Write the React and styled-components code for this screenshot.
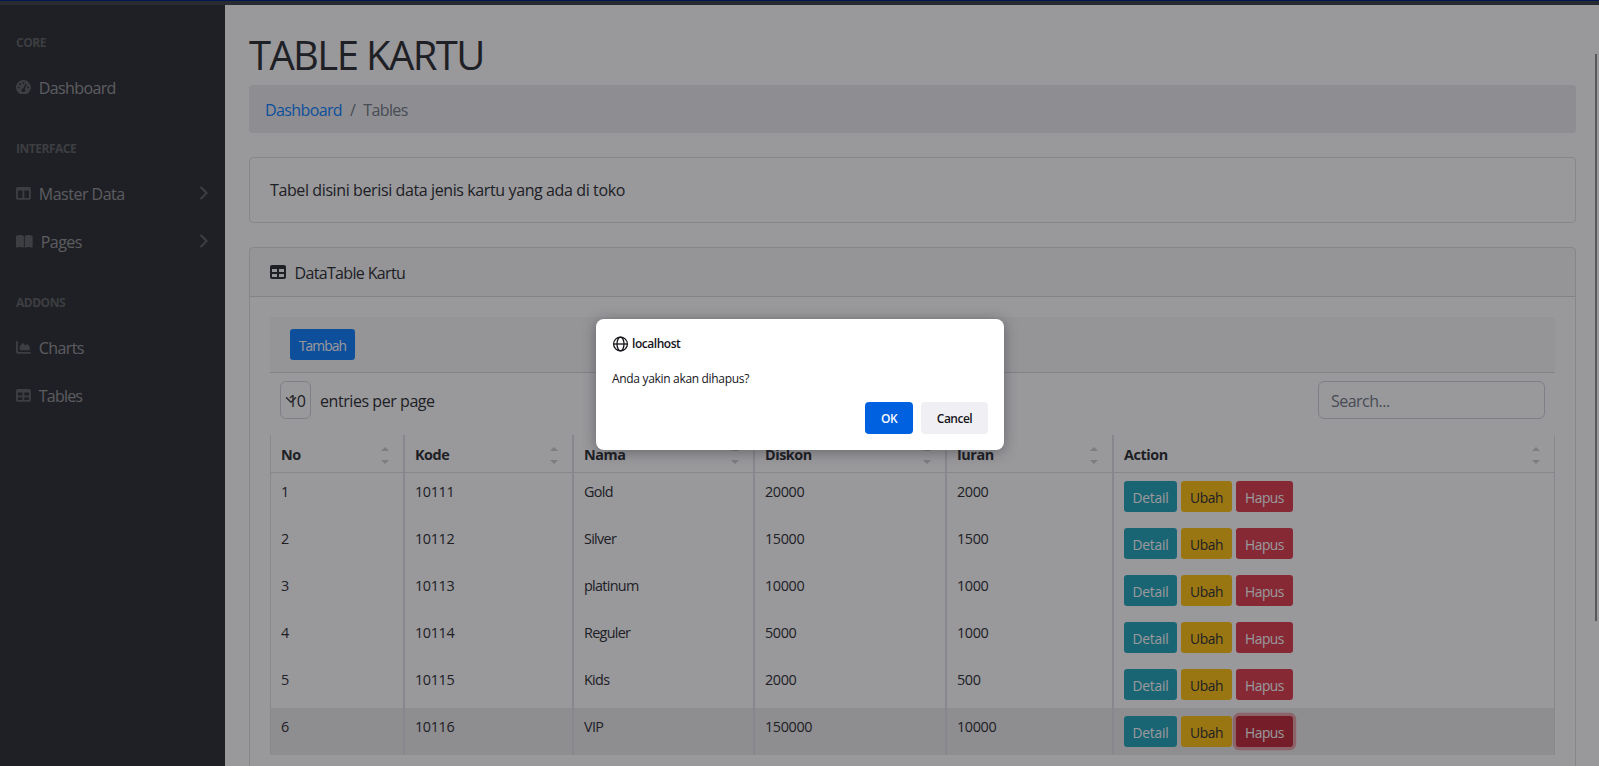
import React from "react";
import styled, { createGlobalStyle, css } from "styled-components";
import { FaGaugeHigh, FaTableColumns, FaBookOpen, FaChartArea, FaTable } from "react-icons/fa6";

const Global = createGlobalStyle`
  *, *::before, *::after { box-sizing: border-box; }
  html, body { margin: 0; height: 766px; overflow: hidden; }
  body {
    font-family: "Open Sans", "Noto Sans", sans-serif;
    font-size: 16px;
    line-height: 1.5;
    letter-spacing: -0.44px;
    color: #212529;
    background: #fff;
  }
  h1, p { margin: 0; font-weight: 400; }
  button, input { font: inherit; letter-spacing: inherit; }
`;

const Page = styled.div`
  height: 766px;
  display: flex;
  flex-direction: column;
  overflow: hidden;
`;
const TopBar = styled.div`
  flex: 0 0 5px;
  background: #343a40;
`;
const Columns = styled.div`
  flex: 1;
  min-height: 0;
  display: flex;
`;

const Sidebar = styled.nav`
  flex: 0 0 225px;
  padding-top: 1px;
  background: #212529;
  display: flex;
  flex-direction: column;
`;
const Heading = styled.div`
  padding: 28px 16px 12px;
  font-size: 12px;
  line-height: 18px;
  font-weight: 700;
  letter-spacing: -0.48px;
  color: rgba(255, 255, 255, 0.25);
`;
const NavLink = styled.a`
  display: flex;
  align-items: center;
  height: 48px;
  padding: 0 16px;
  color: rgba(255, 255, 255, 0.5);
  letter-spacing: ${(p) => p.$ls}px;
`;
const NavIcon = styled.span`
  display: flex;
  margin: 0 8px 2px 0;
  font-size: 14.8px;
  color: rgba(255, 255, 255, 0.25);
  svg { width: ${(p) => (p.$wide ? "1.125em" : "1em")}; }
`;
const Arrow = styled.svg`
  width: 8px;
  height: 14px;
  margin: 0 1px 3px auto;
  fill: none;
  stroke: rgba(255, 255, 255, 0.25);
  stroke-width: 2;
  stroke-linecap: round;
  stroke-linejoin: round;
`;

const Main = styled.main`
  flex: 1;
  min-width: 0;
  padding: 26px 23px 0 24px;
  display: flex;
  flex-direction: column;
`;
const Title = styled.h1`
  font-size: 40px;
  line-height: 48px;
  margin-bottom: 6px;
  letter-spacing: -1.6px;
`;
const Breadcrumb = styled.div`
  display: flex;
  gap: 8px;
  padding: 13px 16px 11px;
  margin-bottom: 24px;
  background: #e9ecef;
  border-radius: 4px;
  color: #6c757d;
  letter-spacing: -0.62px;
`;
const Crumb = styled.span`
  color: ${(p) => (p.$active ? "#6c757d" : "#007bff")};
`;
const Card = styled.section`
  border: 1px solid rgba(0, 0, 0, 0.125);
  border-radius: 4px;
  margin-bottom: 24px;
`;
const CardText = styled.p`
  padding: 20px;
  letter-spacing: -0.39px;
`;
const CardHeader = styled.header`
  display: flex;
  align-items: center;
  height: 49px;
  padding: 1px 20px 0;
  letter-spacing: -0.66px;
  background: rgba(0, 0, 0, 0.03);
  border-bottom: 1px solid rgba(0, 0, 0, 0.125);
  svg { margin: 0 8.5px 1px 0; }
`;
const CardBody = styled.div`
  padding: 20px 20px 60px;
`;
const ActionBar = styled.div`
  display: flex;
  padding: 12px 20px;
  background: rgba(0, 0, 0, 0.03);
  border-bottom: 1px solid rgba(0, 0, 0, 0.125);
  border-radius: 3px 3px 0 0;
`;

const tones = {
  primary: css`background: #007bff; color: #fff;`,
  info: css`background: #17a2b8; color: #fff;`,
  warning: css`background: #ffc107; color: #212529;`,
  danger: css`background: #dc3545; color: #fff;`,
  pressed: css`background: #bd2130; color: #fff; box-shadow: 0 0 0 3.2px rgba(225, 83, 97, 0.5);`,
};
const Button = styled.button`
  width: ${(p) => p.$w}px;
  height: 31px;
  padding: 2px 0 0;
  border: 0;
  border-radius: 3.2px;
  font-size: 13.8px;
  line-height: 29px;
  letter-spacing: ${(p) => p.$ls}px;
  text-align: center;
  ${(p) => tones[p.$tone]}
`;

const Controls = styled.div`
  display: flex;
  align-items: center;
  justify-content: space-between;
  height: 62px;
  padding: 0 10px 8px;
`;
const PerPage = styled.label`
  display: flex;
  align-items: center;
  gap: 9px;
`;
const Selector = styled.span`
  display: grid;
  align-items: center;
  width: 31px;
  height: 38px;
  border: 1px solid #ced4da;
  border-radius: 6px;
  > * { grid-area: 1 / 1; }
  svg { margin-left: 4px; }
`;
const SelectorValue = styled.span`
  padding: 1px 0 0 7px;
`;
const PerPageText = styled.span`
  padding-top: 1px;
`;
const Search = styled.input`
  width: 227px;
  height: 38px;
  padding: 1px 12px 0;
  border: 1px solid #ced4da;
  border-radius: 6px;
  background: transparent;
  letter-spacing: -0.52px;
  &::placeholder { color: #6c757d; opacity: 1; }
`;

const Table = styled.div`
  display: flex;
  flex-direction: column;
  font-size: 14.4px;
  line-height: 21.6px;
`;
const Row = styled.div`
  display: grid;
  grid-template-columns: 134px 169px 181px 192px 167px 1fr;
  height: ${(p) => (p.$head ? 38 : 47)}px;
  border-bottom: ${(p) => (p.$head ? "1px solid #dee2e6" : "0")};
  background: ${(p) => (p.$hover ? "rgba(0, 0, 0, 0.075)" : "transparent")};
  font-weight: ${(p) => (p.$head ? 700 : 400)};
`;
const Cell = styled.div`
  display: flex;
  gap: 4px;
  padding: ${(p) => (p.$head ? 9 : 8)}px 14px 0 10px;
  letter-spacing: ${(p) => (p.$head ? -0.45 : p.$words ? -0.7 : -0.36)}px;
  border-left: 1px solid #dee2e6;
  border-right: 1px solid #dee2e6;
  justify-content: ${(p) => (p.$head ? "space-between" : "flex-start")};
`;
const Sorter = styled.span`
  display: flex;
  flex-direction: column;
  gap: 9px;
  padding-top: 3px;
  &::before, &::after {
    content: "";
    border: 4px solid transparent;
  }
  &::before { border-top: 0; border-bottom-color: #000; opacity: 0.2; }
  &::after { border-bottom: 0; border-top-color: #000; opacity: 0.2; }
`;

const Overlay = styled.div`
  position: absolute;
  inset: 0;
  background: rgba(28, 27, 34, 0.45);
`;
const WindowEdge = styled.div`
  position: absolute;
  inset: 0 0 auto 0;
  height: 1px;
  background: #02164f;
`;
const ScrollThumb = styled.div`
  position: absolute;
  top: 54px;
  right: 2px;
  width: 2px;
  height: 567px;
  background: #58585a;
`;
const Dialog = styled.div`
  position: absolute;
  left: 596px;
  top: 319px;
  width: 408px;
  height: 131px;
  padding: 16px;
  display: flex;
  flex-direction: column;
  border-radius: 8px;
  background: #fff;
  color: #15141a;
  font-size: 12px;
  line-height: 18px;
  box-shadow: 0 2px 14px rgba(28, 27, 34, 0.4);
`;
const Origin = styled.div`
  display: flex;
  align-items: center;
  gap: 3px;
  font-weight: 600;
  letter-spacing: -0.45px;
`;
const Message = styled.p`
  margin: 17px 0 14px;
  letter-spacing: -0.32px;
`;
const DialogButtons = styled.div`
  display: flex;
  justify-content: flex-end;
  gap: 8px;
`;
const DialogButton = styled.button`
  width: ${(p) => p.$w}px;
  height: 32px;
  padding: 1px 0 0;
  border: 0;
  border-radius: 4px;
  font-weight: 600;
  letter-spacing: -0.5px;
  color: ${(p) => (p.$primary ? "#fbfbfe" : "#15141a")};
  background: ${(p) => (p.$primary ? "#0061e0" : "#f0f0f4")};
`;

const Globe = () => (
  <svg width="17" height="17" viewBox="0 0 17 17" fill="none" stroke="#15141a" strokeWidth="1.3">
    <circle cx="8.5" cy="8" r="6.9" />
    <ellipse cx="8.5" cy="8" rx="3.5" ry="6.9" />
    <path d="M1.6 8h13.8" />
  </svg>
);
const Chevron = () => (
  <svg width="12" height="12" viewBox="0 0 16 16" fill="none" stroke="#343a40" strokeWidth="2" strokeLinecap="round" strokeLinejoin="round">
    <path d="m2 5 6 6 6-6" />
  </svg>
);
const AngleRight = () => (
  <Arrow viewBox="0 0 8 14">
    <path d="m1.2 1.5 5.4 5.5-5.4 5.5" />
  </Arrow>
);

const columns = ["No", "Kode", "Nama", "Diskon", "Iuran", "Action"];
const rows = [
  ["1", "10111", "Gold", "20000", "2000"],
  ["2", "10112", "Silver", "15000", "1500"],
  ["3", "10113", "platinum", "10000", "1000"],
  ["4", "10114", "Reguler", "5000", "1000"],
  ["5", "10115", "Kids", "2000", "500"],
  ["6", "10116", "VIP", "150000", "10000"],
];

export default function App() {
  return (
    <>
      <Global />
      <Page>
        <TopBar />
        <Columns>
          <Sidebar>
            <Heading>CORE</Heading>
            <NavLink $ls={-0.62}><NavIcon><FaGaugeHigh /></NavIcon>Dashboard</NavLink>
            <Heading>INTERFACE</Heading>
            <NavLink $ls={-0.5}><NavIcon><FaTableColumns /></NavIcon>Master Data<AngleRight /></NavLink>
            <NavLink $ls={-0.5}><NavIcon $wide><FaBookOpen /></NavIcon>Pages<AngleRight /></NavLink>
            <Heading>ADDONS</Heading>
            <NavLink $ls={-0.62}><NavIcon><FaChartArea /></NavIcon>Charts</NavLink>
            <NavLink $ls={-0.8}><NavIcon><FaTable /></NavIcon>Tables</NavLink>
          </Sidebar>
          <Main>
            <Title>TABLE KARTU</Title>
            <Breadcrumb>
              <Crumb>Dashboard</Crumb>
              <span>/</span>
              <Crumb $active>Tables</Crumb>
            </Breadcrumb>
            <Card>
              <CardText>Tabel disini berisi data jenis kartu yang ada di toko</CardText>
            </Card>
            <Card>
              <CardHeader><FaTable />DataTable Kartu</CardHeader>
              <CardBody>
                <ActionBar><Button $tone="primary" $w={65} $ls={-0.9}>Tambah</Button></ActionBar>
                <Controls>
                  <PerPage>
                    <Selector><SelectorValue>10</SelectorValue><Chevron /></Selector>
                    <PerPageText>entries per page</PerPageText>
                  </PerPage>
                  <Search placeholder="Search..." />
                </Controls>
                <Table>
                  <Row $head>
                    {columns.map((name) => (
                      <Cell $head key={name}>{name}<Sorter /></Cell>
                    ))}
                  </Row>
                  {rows.map((row, i) => (
                    <Row key={row[0]} $hover={i === 5}>
                      {row.map((value, j) => <Cell key={j} $words={j === 2}>{value}</Cell>)}
                      <Cell>
                        <Button $tone="info" $w={53} $ls={-0.25}>Detail</Button>
                        <Button $tone="warning" $w={51} $ls={-0.4}>Ubah</Button>
                        <Button $tone={i === 5 ? "pressed" : "danger"} $w={57} $ls={-0.5}>Hapus</Button>
                      </Cell>
                    </Row>
                  ))}
                </Table>
              </CardBody>
            </Card>
          </Main>
        </Columns>
      </Page>
      <Overlay />
      <ScrollThumb />
      <WindowEdge />
      <Dialog>
        <Origin><Globe />localhost</Origin>
        <Message>Anda yakin akan dihapus?</Message>
        <DialogButtons>
          <DialogButton $primary $w={48}>OK</DialogButton>
          <DialogButton $w={67}>Cancel</DialogButton>
        </DialogButtons>
      </Dialog>
    </>
  );
}
